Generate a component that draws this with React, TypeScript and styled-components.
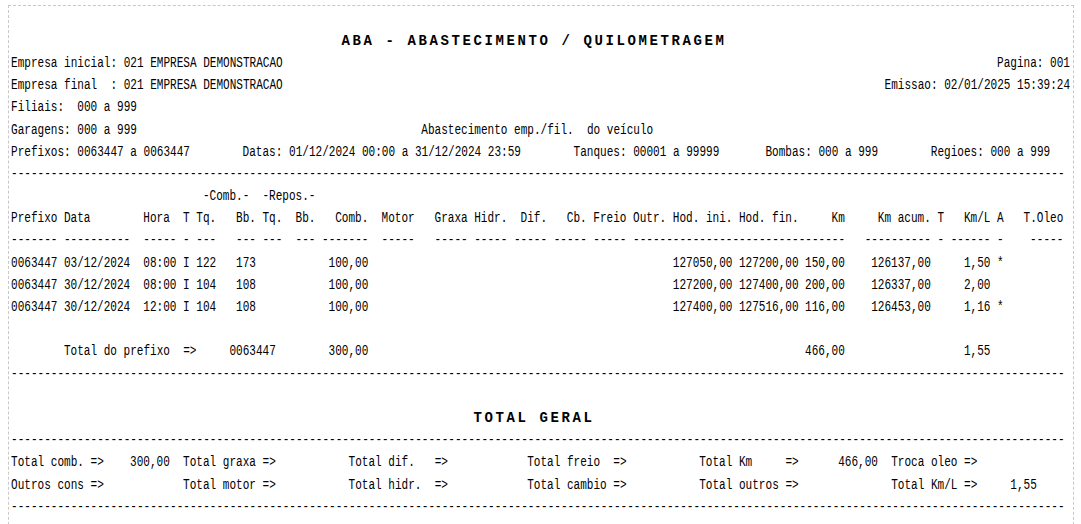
import styled, { createGlobalStyle } from "styled-components"

const GlobalStyle = createGlobalStyle`
    html, body {
        margin: 0;
        padding: 0;
        background: #fff;
        overflow: hidden;
    }
    body {
        font-family: "Liberation Mono", monospace;
        color: #000;
    }
`

const Sheet = styled.div`
    box-sizing: border-box;
    width: 1066px;
    height: 560px;
    margin: 5px 0 0 8px;
    padding: 23.8px 0 0 2px;
    border: 1px dashed #c8c8c8;
    overflow: hidden;
`

const Title = styled.div`
    height: 22.2px;
    line-height: 22.2px;
    padding-right: 16px;
    text-align: center;
    font-family: "Liberation Mono", monospace;
    font-size: 14px;
    font-weight: bold;
    letter-spacing: 2.6px;
    white-space: pre;
`

// the report is a 160 column print, squeezed to the narrow printer font
const Mono = styled.div`
    width: 160ch;
    font-family: "Liberation Mono", monospace;
    font-size: 14px;
    transform: scaleX(0.7887);
    transform-origin: 0 0;
`

const Row = styled.div`
    display: grid;
    grid-template-columns: repeat(160, 1ch);
    height: 22.2px;
    line-height: 22.2px;
    white-space: pre;
`

interface CellProps {
    $col: number;
    $span: number;
    $right?: boolean;
}

const Cell = styled.span<CellProps>`
    grid-row: 1;
    grid-column: ${props => props.$col + 1} / span ${props => props.$span};
    text-align: ${props => (props.$right ? "right" : "left")};
    min-width: 0;
`

interface AtProps {
    col: number;
    text: string;
    span?: number;
    right?: boolean;
}

const At = ({ col, text, span, right }: AtProps) => (
    <Cell $col={col} $span={span || text.length} $right={right}>{text}</Cell>
)

const Dashes = ({ col = 0, count = 159 }: { col?: number; count?: number }) => (
    <At col={col} text={"-".repeat(count)} />
)

interface Column {
    key: string;
    col: number;
    span: number;
    label: string;
    right?: boolean;
}

const columns: Column[] = [
    { key: "prefixo", col: 0, span: 7, label: "Prefixo" },
    { key: "data", col: 8, span: 10, label: "Data" },
    { key: "hora", col: 20, span: 5, label: "Hora" },
    { key: "t", col: 26, span: 1, label: "T" },
    { key: "tq", col: 28, span: 3, label: "Tq." },
    { key: "bb", col: 34, span: 3, label: "Bb." },
    { key: "rtq", col: 38, span: 3, label: "Tq." },
    { key: "rbb", col: 43, span: 3, label: "Bb." },
    { key: "comb", col: 47, span: 7, label: "Comb.", right: true },
    { key: "motor", col: 56, span: 5, label: "Motor" },
    { key: "graxa", col: 64, span: 5, label: "Graxa" },
    { key: "hidr", col: 70, span: 5, label: "Hidr." },
    { key: "dif", col: 76, span: 5, label: "Dif.", right: true },
    { key: "cb", col: 82, span: 5, label: "Cb.", right: true },
    { key: "freio", col: 88, span: 5, label: "Freio" },
    { key: "outr", col: 94, span: 5, label: "Outr." },
    { key: "hodIni", col: 100, span: 9, label: "Hod. ini." },
    { key: "hodFin", col: 110, span: 9, label: "Hod. fin." },
    { key: "km", col: 119, span: 7, label: "Km", right: true },
    { key: "kmAcum", col: 129, span: 10, label: "Km acum.", right: true },
    { key: "t2", col: 140, span: 1, label: "T" },
    { key: "kml", col: 142, span: 6, label: "Km/L", right: true },
    { key: "a", col: 149, span: 1, label: "A" },
    { key: "oleo", col: 153, span: 6, label: "T.Oleo", right: true },
]

const underline: [number, number][] = [
    [0, 7], [8, 10], [20, 5], [26, 1], [28, 3], [34, 3], [38, 3], [43, 3],
    [47, 7], [56, 5], [64, 5], [70, 5], [76, 5], [82, 5], [88, 5], [94, 5],
    [99, 27], [129, 10], [140, 1], [142, 6], [149, 1], [154, 5],
]

type Line = Record<string, string>

const lines: Line[] = [
    { prefixo: "0063447", data: "03/12/2024", hora: "08:00", t: "I", tq: "122", bb: "173", comb: "100,00", hodIni: "127050,00", hodFin: "127200,00", km: "150,00", kmAcum: "126137,00", kml: "1,50", a: "*" },
    { prefixo: "0063447", data: "30/12/2024", hora: "08:00", t: "I", tq: "104", bb: "108", comb: "100,00", hodIni: "127200,00", hodFin: "127400,00", km: "200,00", kmAcum: "126337,00", kml: "2,00" },
    { prefixo: "0063447", data: "30/12/2024", hora: "12:00", t: "I", tq: "104", bb: "108", comb: "100,00", hodIni: "127400,00", hodFin: "127516,00", km: "116,00", kmAcum: "126453,00", kml: "1,16", a: "*" },
]

const prefixTotal: Line = { comb: "300,00", km: "466,00", kml: "1,55" }

const DataRow = ({ line }: { line: Line }) => (
    <Row>
        {columns.map(c => line[c.key] ? (
            <Cell key={c.key} $col={c.col} $span={c.span} $right={c.right}>{line[c.key]}</Cell>
        ) : null)}
    </Row>
)

const App = () => {
    return (
        <>
            <GlobalStyle />
            <Sheet>
                <Title>ABA - ABASTECIMENTO / QUILOMETRAGEM</Title>
                <Mono>
                    <Row>
                        <At col={0} text="Empresa inicial: 021 EMPRESA DEMONSTRACAO" />
                        <At col={149} text="Pagina: 001" />
                    </Row>
                    <Row>
                        <At col={0} text="Empresa final  : 021 EMPRESA DEMONSTRACAO" />
                        <At col={132} text="Emissao: 02/01/2025 15:39:24" />
                    </Row>
                    <Row>
                        <At col={0} text="Filiais:  000 a 999" />
                    </Row>
                    <Row>
                        <At col={0} text="Garagens: 000 a 999" />
                        <At col={62} text="Abastecimento emp./fil.  do veículo" />
                    </Row>
                    <Row>
                        <At col={0} text="Prefixos: 0063447 a 0063447" />
                        <At col={35} text="Datas: 01/12/2024 00:00 a 31/12/2024 23:59" />
                        <At col={85} text="Tanques: 00001 a 99999" />
                        <At col={114} text="Bombas: 000 a 999" />
                        <At col={139} text="Regioes: 000 a 999" />
                    </Row>
                    <Row><Dashes /></Row>
                    <Row>
                        <At col={29} text="-Comb.-" />
                        <At col={38} text="-Repos.-" />
                    </Row>
                    <Row>
                        {columns.map(c => (
                            <Cell key={c.key} $col={c.col} $span={c.span} $right={c.right}>{c.label}</Cell>
                        ))}
                    </Row>
                    <Row>
                        {underline.map(([col, count]) => <Dashes key={col} col={col} count={count} />)}
                    </Row>
                    {lines.map((line, i) => <DataRow key={i} line={line} />)}
                    <Row />
                    <Row>
                        <At col={8} text="Total do prefixo  =>" />
                        <At col={33} text="0063447" />
                        <Cell $col={47} $span={7} $right>{prefixTotal.comb}</Cell>
                        <Cell $col={119} $span={7} $right>{prefixTotal.km}</Cell>
                        <Cell $col={142} $span={6} $right>{prefixTotal.kml}</Cell>
                    </Row>
                    <Row><Dashes /></Row>
                    <Row />
                </Mono>
                <Title>TOTAL GERAL</Title>
                <Mono>
                    <Row><Dashes /></Row>
                    <Row>
                        <At col={0} text="Total comb. =>" />
                        <At col={18} text="300,00" span={6} right />
                        <At col={26} text="Total graxa =>" />
                        <At col={51} text="Total dif.   =>" />
                        <At col={78} text="Total freio  =>" />
                        <At col={104} text="Total Km     =>" />
                        <At col={125} text="466,00" span={6} right />
                        <At col={133} text="Troca oleo =>" />
                    </Row>
                    <Row>
                        <At col={0} text="Outros cons =>" />
                        <At col={26} text="Total motor =>" />
                        <At col={51} text="Total hidr.  =>" />
                        <At col={78} text="Total cambio =>" />
                        <At col={104} text="Total outros =>" />
                        <At col={133} text="Total Km/L =>" />
                        <At col={151} text="1,55" />
                    </Row>
                    <Row><Dashes /></Row>
                </Mono>
            </Sheet>
        </>
    );
};

export default App;
